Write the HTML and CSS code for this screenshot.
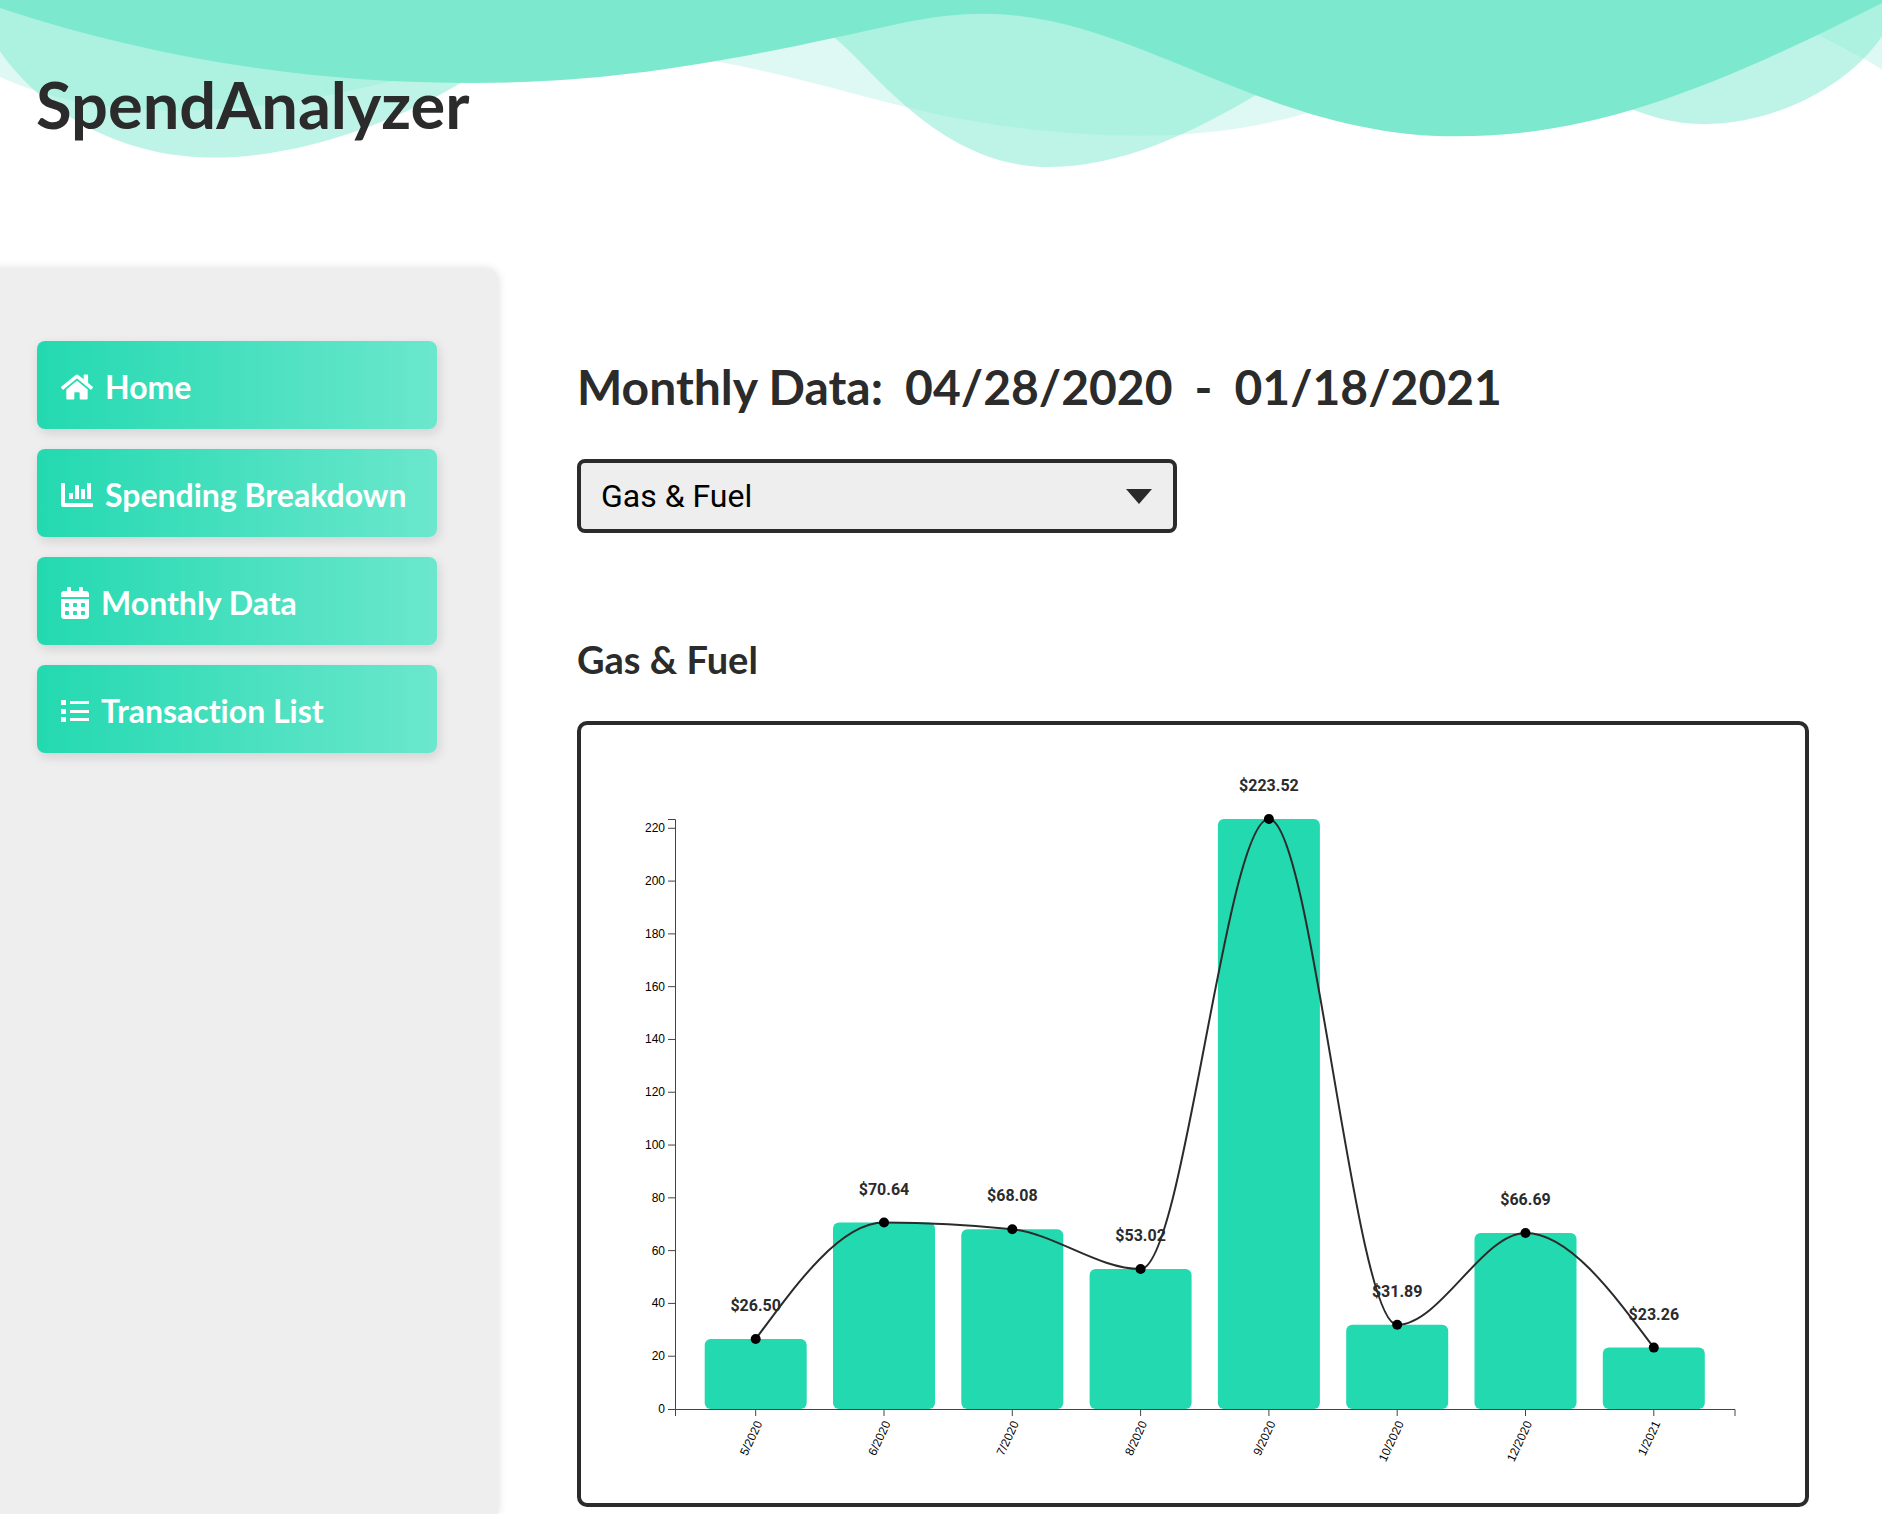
FILE: index.html
```html
<!DOCTYPE html>
<html lang="en">
<head>
<meta charset="utf-8">
<meta name="viewport" content="width=device-width, initial-scale=1">
<title>SpendAnalyzer</title>
<link rel="stylesheet" href="styles.css">
</head>
<body>
<header class="site-header">
  <svg class="waves" viewBox="0 0 1200 120" preserveAspectRatio="none" aria-hidden="true">
    <path opacity=".25" d="M0,0V51C45,72 90,74 130,73C180,71 215,62 245,55S330,34 370,34S420,34 458,41C510,51 550,65 599,76C640,85 685,90 726,90C765,90 800,85 833,75S920,40 1000,16S1130,8 1159,23C1172,30 1186,37 1200,46V0Z"/>
    <path opacity=".5" d="M0,0V34C25,72 75,104.500 136,104.500C190,104.500 250,82 293,55.500S380,2 440,2S500,6 532,25C555,43 598,110.700 669,110.700C715,110.700 760,88 800,63.500S860,38 900,38S1005,58 1039,72C1055,78 1068,82.300 1087,82.300C1130,82.300 1178,58 1200,24V0Z"/>
    <path d="M0,0V5.300C95,38 195,55 302,55C375,55 440,46 532,25C570,16.800 595,9.100 627,9.100C725,9.100 805,90.400 929,90.400C1015,90.400 1090,60 1200,2V0Z"/>
  </svg>
  <h1 class="brand">SpendAnalyzer</h1>
</header>
<div class="layout">
  <aside class="sidebar">
    <nav class="nav" aria-label="Main">
      <a class="nav-link" href="#home">
        <svg class="icon" viewBox="0 0 576 512" aria-hidden="true"><path d="M280.37 148.26L96 300.11V464a16 16 0 0 0 16 16l112.06-.29a16 16 0 0 0 15.92-16V368a16 16 0 0 1 16-16h64a16 16 0 0 1 16 16v95.64a16 16 0 0 0 16 16.05L464 480a16 16 0 0 0 16-16V300L295.67 148.26a12.19 12.19 0 0 0-15.3 0zM571.6 251.47L488 182.56V44.05a12 12 0 0 0-12-12h-56a12 12 0 0 0-12 12v72.61L318.47 43a48 48 0 0 0-61 0L4.34 251.47a12 12 0 0 0-1.6 16.9l25.5 31A12 12 0 0 0 45.15 301l235.22-193.74a12.19 12.19 0 0 1 15.3 0L530.9 301a12 12 0 0 0 16.9-1.6l25.5-31a12 12 0 0 0-1.7-16.93z"/></svg>
        <span>Home</span>
      </a>
      <a class="nav-link" href="#breakdown">
        <svg class="icon" viewBox="0 0 32 32" aria-hidden="true"><path d="M1 4h2a1 1 0 0 1 1 1v19h27a1 1 0 0 1 1 1v2a1 1 0 0 1-1 1H2a2 2 0 0 1-2-2V5a1 1 0 0 1 1-1zM8 14h4v6H8zM14 6h4v14h-4zM20 10h4v10h-4zM26 4h4v16h-4z"/></svg>
        <span>Spending Breakdown</span>
      </a>
      <a class="nav-link" href="#monthly">
        <svg class="icon icon-narrow" viewBox="0 0 448 512" aria-hidden="true"><path d="M0 464c0 26.500 21.500 48 48 48h352c26.500 0 48-21.500 48-48V192H0v272zm320-196c0-6.600 5.400-12 12-12h40c6.600 0 12 5.400 12 12v40c0 6.600-5.400 12-12 12h-40c-6.600 0-12-5.400-12-12v-40zm0 128c0-6.600 5.400-12 12-12h40c6.600 0 12 5.400 12 12v40c0 6.600-5.400 12-12 12h-40c-6.600 0-12-5.400-12-12v-40zM192 268c0-6.600 5.400-12 12-12h40c6.600 0 12 5.400 12 12v40c0 6.600-5.400 12-12 12h-40c-6.600 0-12-5.400-12-12v-40zm0 128c0-6.600 5.400-12 12-12h40c6.600 0 12 5.400 12 12v40c0 6.600-5.400 12-12 12h-40c-6.600 0-12-5.400-12-12v-40zM64 268c0-6.600 5.400-12 12-12h40c6.600 0 12 5.400 12 12v40c0 6.600-5.400 12-12 12H76c-6.600 0-12-5.400-12-12v-40zm0 128c0-6.600 5.400-12 12-12h40c6.600 0 12 5.400 12 12v40c0 6.600-5.400 12-12 12H76c-6.600 0-12-5.400-12-12v-40zM400 64h-48V16c0-8.800-7.200-16-16-16h-32c-8.800 0-16 7.200-16 16v48H160V16c0-8.800-7.200-16-16-16h-32c-8.800 0-16 7.200-16 16v48H48C21.500 64 0 85.500 0 112v48h448v-48c0-26.500-21.500-48-48-48z"/></svg>
        <span>Monthly Data</span>
      </a>
      <a class="nav-link" href="#transactions">
        <svg class="icon icon-narrow" viewBox="0 0 28 32" aria-hidden="true"><path d="M0 5h5v5H0zM0 14h5v5H0zM0 22h5v5H0zM9 6h19v3H9zM9 15h19v3H9zM9 23h19v3H9z"/></svg>
        <span>Transaction List</span>
      </a>
    </nav>
  </aside>
  <main class="content">
    <h2 class="page-title"><span>Monthly Data:</span> <span>04/28/2020</span> <span>-</span> <span>01/18/2021</span></h2>
    <div class="picker">
      <select class="picker-select" aria-label="Category">
        <option>Gas &amp; Fuel</option>
      </select>
    </div>
    <h3 class="chart-title">Gas &amp; Fuel</h3>
    <div class="chart-card">
      <svg class="chart" id="chart" viewBox="0 0 1224 778" role="img" aria-label="Gas &amp; Fuel spending by month"></svg>
    </div>
  </main>
</div>
<script src="chart.js"></script>
</body>
</html>
```
FILE: styles.css
```css
* {
  box-sizing: border-box;
}

body {
  margin: 0;
  min-height: 100vh;
  display: flex;
  flex-direction: column;
  background: #fff;
  color: #2b2b2b;
  font-family: Roboto, sans-serif;
}

h1, h2, h3 {
  margin: 0;
  font-family: Lato, sans-serif;
  font-weight: 700;
}

.site-header {
  position: relative;
  height: 269px;
  padding: 64px 36px 0;
}

.waves {
  position: absolute;
  top: 0;
  left: 0;
  width: 100%;
  height: 181px;
  fill: #7ce9cf;
}

.brand {
  position: relative;
  font-size: 65px;
  line-height: 80px;
}

.layout {
  flex: 1;
  display: flex;
  overflow-x: clip;
}

/* Starts off-screen so that the shadow runs straight to the window edge */
.sidebar {
  flex: none;
  width: 518px;
  margin-left: -20px;
  padding: 72px 37px 72px 57px;
  background: #eee;
  border-radius: 0 12px 0 0;
  box-shadow: 0 0 10px rgba(0, 0, 0, 0.15);
}

.nav {
  display: flex;
  flex-direction: column;
  gap: 20px;
  width: 400px;
}

.nav-link {
  display: flex;
  align-items: center;
  gap: 12px;
  height: 88px;
  padding: 4px 24px 0;
  border-radius: 8px;
  background: linear-gradient(to right, #23d9b0, #6be7cd);
  box-shadow: 2px 4px 12px rgba(0, 0, 0, 0.12);
  color: #fff;
  font-family: Lato, sans-serif;
  font-size: 32px;
  font-weight: 700;
  font-variant-ligatures: none;
  line-height: 40px;
  text-decoration: none;
}

.icon {
  flex: none;
  width: 32px;
  height: 32px;
  fill: currentColor;
}

.icon-narrow {
  width: 28px;
}

.content {
  flex: 1;
  min-width: 0;
  padding: 86px 73px 0 79px;
}

.page-title {
  display: flex;
  flex-wrap: wrap;
  gap: 0 22px;
  font-size: 48px;
  line-height: 64px;
}

.picker {
  position: relative;
  width: 600px;
  max-width: 100%;
  margin-top: 40px;
}

.picker::after {
  content: "";
  position: absolute;
  top: 30px;
  right: 25px;
  border: 13px solid transparent;
  border-top: 15px solid #2b2b2b;
  border-bottom: 0;
  pointer-events: none;
}

.picker-select {
  display: block;
  width: 100%;
  height: 74px;
  padding: 0 20px;
  border: 4px solid #2b2b2b;
  border-radius: 8px;
  background: #eee;
  color: #000;
  font: 32px Roboto, sans-serif;
  appearance: none;
}

.chart-title {
  margin-top: 102px;
  font-size: 38px;
  line-height: 48px;
}

.chart-card {
  margin-top: 38px;
  border: 4px solid #2b2b2b;
  border-radius: 10px;
}

.chart {
  display: block;
  width: 100%;
  height: auto;
}

.axis {
  fill: none;
  stroke: #444;
}

.tick {
  fill: #000;
  font: 12px "Liberation Sans", Arial, sans-serif;
  text-anchor: end;
}

.bar {
  fill: #23d9b0;
}

.trend {
  fill: none;
  stroke: #2b2b2b;
  stroke-width: 2;
}

.value {
  fill: #2b2b2b;
  font: 700 16px Roboto, sans-serif;
  text-anchor: middle;
}
```
FILE: chart.js
```js
const data = [
  ["5/2020", 26.5], ["6/2020", 70.64], ["7/2020", 68.08], ["8/2020", 53.02],
  ["9/2020", 223.52], ["10/2020", 31.89], ["12/2020", 66.69], ["1/2021", 23.26]
];

const chart = document.getElementById("chart");
const left = 95, right = 1154, top_ = 94, bottom = 684;
const barWidth = 102, step = 128.3, first = 174.7;
const max = Math.max(...data.map(d => d[1]));
const y = v => bottom - v / max * (bottom - top_);
const x = i => first + i * step;

function add(name, attrs, text) {
  const node = document.createElementNS("http://www.w3.org/2000/svg", name);
  for (const key in attrs) node.setAttribute(key, attrs[key]);
  if (text) node.textContent = text;
  chart.appendChild(node);
}

// Monotone cubic interpolation through the bar tops
function monotonePath(pts) {
  const n = pts.length;
  const slope = pts.slice(1).map((p, i) => (p[1] - pts[i][1]) / (p[0] - pts[i][0]));
  const t = pts.map((p, i) => {
    if (i === 0 || i === n - 1) return 0;
    const a = slope[i - 1], b = slope[i];
    return (Math.sign(a) + Math.sign(b)) * Math.min(Math.abs(a), Math.abs(b), Math.abs(a + b) / 4);
  });
  t[0] = (3 * slope[0] - t[1]) / 2;
  t[n - 1] = (3 * slope[n - 2] - t[n - 2]) / 2;
  let d = `M${pts[0]}`;
  for (let i = 1; i < n; i++) {
    const h = (pts[i][0] - pts[i - 1][0]) / 3;
    d += `C${pts[i - 1][0] + h},${pts[i - 1][1] + h * t[i - 1]},${pts[i][0] - h},${pts[i][1] - h * t[i]},${pts[i]}`;
  }
  return d;
}

data.forEach(([, v], i) => add("rect", {
  class: "bar", x: x(i) - barWidth / 2, y: y(v), width: barWidth, height: bottom - y(v), rx: 6
}));

add("path", { class: "axis", d: `M${left - 8},${top_ + 0.5}H${left - 0.5}V${bottom + 0.5}H${left - 8}` });
for (let v = 0; v <= 220; v += 20) {
  if (v) add("path", { class: "axis", d: `M${left - 8},${y(v)}H${left}` });
  add("text", { class: "tick", x: left - 11, y: y(v) + 4 }, String(v));
}

add("path", { class: "axis", d: `M${left - 0.5},${bottom + 7}V${bottom + 0.5}H${right}V${bottom + 7}` });
data.forEach(([label], i) => {
  add("path", { class: "axis", d: `M${x(i)},${bottom}V${bottom + 7}` });
  add("text", { class: "tick", x: -9, y: 2, transform: `translate(${x(i)},${bottom + 10}) rotate(-65) translate(8,6)` }, label);
});

const points = data.map(([, v], i) => [x(i), y(v)]);
data.forEach(([, v], i) => add("text", { class: "value", x: x(i), y: y(v) - 28 }, "$" + v.toFixed(2)));
add("path", { class: "trend", d: monotonePath(points) });
points.forEach(p => add("circle", { cx: p[0], cy: p[1], r: 5 }));
```
